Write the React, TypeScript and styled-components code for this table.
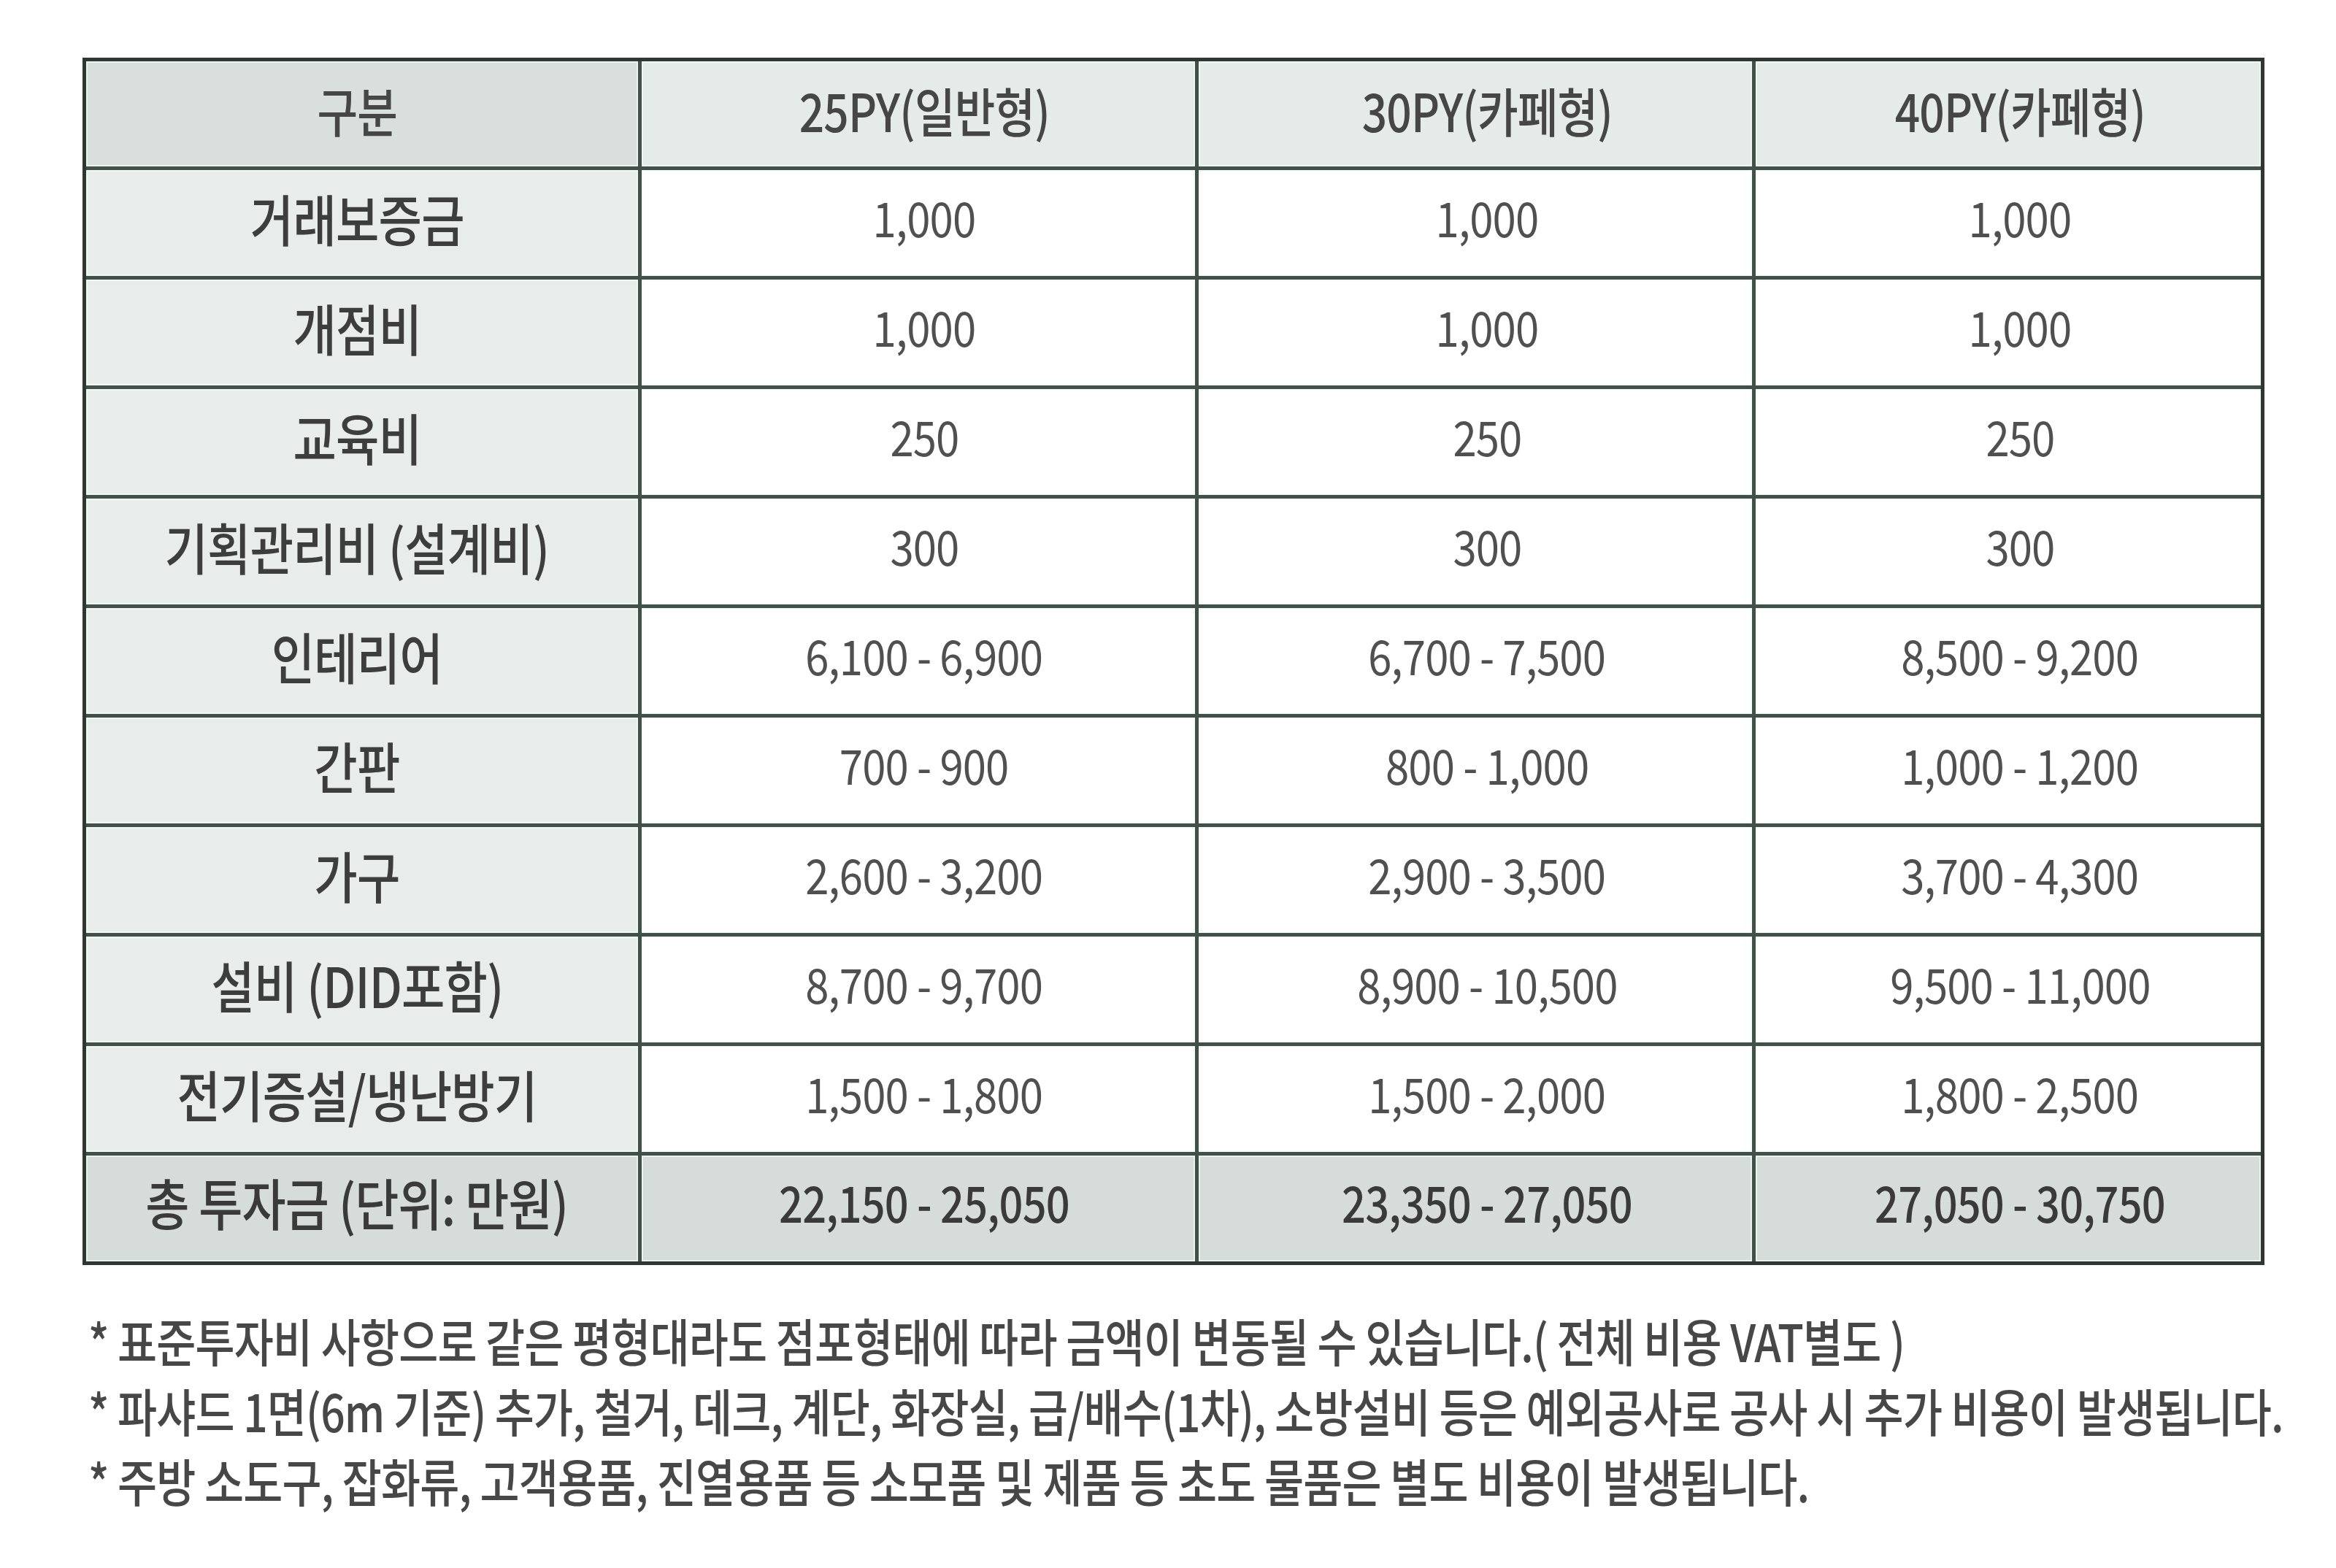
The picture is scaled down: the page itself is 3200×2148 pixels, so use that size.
import React from "react";
import styled, { createGlobalStyle } from "styled-components";

const Global = createGlobalStyle`
  html, body { margin: 0; padding: 0; background: #ffffff; }
  body { font-family: "Noto Sans CJK KR", "Noto Sans", sans-serif; }
`;

const Page = styled.div`
  width: 3200px;
  height: 2148px;
  box-sizing: border-box;
  padding: 79px 0 0 113px;
  display: flex;
  flex-direction: column;
`;

const Grid = styled.div`
  width: 2989px;
  box-sizing: border-box;
  display: grid;
  grid-template-columns: 756px 758px 758px 692px;
  grid-template-rows: 144px repeat(10, 145px);
  gap: 5px;
  background: #43504a;
  border: 5px solid #303733;
`;

type Tone = "corner" | "head" | "label" | "data" | "total";
const toneBg: Record<Tone, string> = {
  corner: "#d8dfdc",
  head: "#e5ebe9",
  label: "#e8edeb",
  data: "#ffffff",
  total: "#d6dcd9",
};

const Cell = styled.div<{ $tone: Tone; $shift: number }>`
  background: ${(p) => toneBg[p.$tone]};
  display: flex;
  align-items: center;
  justify-content: center;
  overflow: hidden;
  box-sizing: border-box;
  padding-left: ${(p) => Math.max(0, p.$shift * 2)}px;
  padding-right: ${(p) => Math.max(0, -p.$shift * 2)}px;
  box-shadow: inset 0 0 0 2px rgba(240, 252, 247, 0.7);
`;

type Kind = "head" | "label" | "num" | "total" | "totalLabel";
const kindStyle: Record<
  Kind,
  { size: number; sx: number; weight: number; color: string; dy: number }
> = {
  head: { size: 72, sx: 0.84, weight: 500, color: "#464646", dy: -6 },
  label: { size: 76, sx: 0.85, weight: 500, color: "#3d3d3d", dy: -8 },
  totalLabel: { size: 76, sx: 0.86, weight: 500, color: "#3a3a3a", dy: -10 },
  num: { size: 66, sx: 0.88, weight: 400, color: "#505050", dy: -10 },
  total: { size: 68, sx: 0.85, weight: 500, color: "#3a3a3a", dy: -10 },
};

const CellText = styled.span<{ $kind: Kind }>`
  display: inline-block;
  white-space: nowrap;
  font-size: ${(p) => kindStyle[p.$kind].size}px;
  font-weight: ${(p) => kindStyle[p.$kind].weight};
  color: ${(p) => kindStyle[p.$kind].color};
  transform: translateY(${(p) => kindStyle[p.$kind].dy}px)
    scaleX(${(p) => kindStyle[p.$kind].sx});
  letter-spacing: -1px;
  line-height: 1;
`;

const Notes = styled.div`
  margin-top: 55px;
  padding-left: 8px;
  display: flex;
  flex-direction: column;
`;

const NoteLine = styled.div`
  height: 96px;
  display: flex;
  align-items: center;
  white-space: nowrap;
`;

const NoteText = styled.span`
  display: inline-block;
  font-size: 70px;
  font-weight: 500;
  color: #474747;
  letter-spacing: -1px;
  transform: scaleX(0.84);
  transform-origin: left center;
  line-height: 1;
`;

const headers = ["25PY(일반형)", "30PY(카페형)", "40PY(카페형)"];
const colShift = [-7, 8, 16, 16];

const rows: [string, string, string, string][] = [
  ["거래보증금", "1,000", "1,000", "1,000"],
  ["개점비", "1,000", "1,000", "1,000"],
  ["교육비", "250", "250", "250"],
  ["기획관리비 (설계비)", "300", "300", "300"],
  ["인테리어", "6,100 - 6,900", "6,700 - 7,500", "8,500 - 9,200"],
  ["간판", "700 - 900", "800 - 1,000", "1,000 - 1,200"],
  ["가구", "2,600 - 3,200", "2,900 - 3,500", "3,700 - 4,300"],
  ["설비 (DID포함)", "8,700 - 9,700", "8,900 - 10,500", "9,500 - 11,000"],
  ["전기증설/냉난방기", "1,500 - 1,800", "1,500 - 2,000", "1,800 - 2,500"],
];

const total: [string, string, string, string] = [
  "총 투자금 (단위: 만원)",
  "22,150 - 25,050",
  "23,350 - 27,050",
  "27,050 - 30,750",
];

const notes = [
  "* 표준투자비 사항으로 같은 평형대라도 점포형태에 따라 금액이 변동될 수 있습니다.( 전체 비용 VAT별도 )",
  "* 파샤드 1면(6m 기준) 추가, 철거, 데크, 계단, 화장실, 급/배수(1차), 소방설비 등은 예외공사로 공사 시 추가 비용이 발생됩니다.",
  "* 주방 소도구, 잡화류, 고객용품, 진열용품 등 소모품 및 제품 등 초도 물품은 별도 비용이 발생됩니다.",
];

export default function App() {
  return (
    <Page>
      <Global />
      <Grid>
        <Cell $tone="corner" $shift={colShift[0]}>
          <CellText $kind="head">구분</CellText>
        </Cell>
        {headers.map((h, i) => (
          <Cell key={h} $tone="head" $shift={colShift[i + 1]}>
            <CellText $kind="head">{h}</CellText>
          </Cell>
        ))}
        {rows.map((r) => (
          <React.Fragment key={r[0]}>
            <Cell $tone="label" $shift={colShift[0]}>
              <CellText $kind="label">{r[0]}</CellText>
            </Cell>
            {r.slice(1).map((v, i) => (
              <Cell key={i} $tone="data" $shift={colShift[i + 1]}>
                <CellText $kind="num">{v}</CellText>
              </Cell>
            ))}
          </React.Fragment>
        ))}
        {total.map((v, i) => (
          <Cell key={i} $tone="total" $shift={colShift[i]}>
            <CellText $kind={i === 0 ? "totalLabel" : "total"}>{v}</CellText>
          </Cell>
        ))}
      </Grid>
      <Notes>
        {notes.map((n) => (
          <NoteLine key={n}>
            <NoteText>{n}</NoteText>
          </NoteLine>
        ))}
      </Notes>
    </Page>
  );
}
